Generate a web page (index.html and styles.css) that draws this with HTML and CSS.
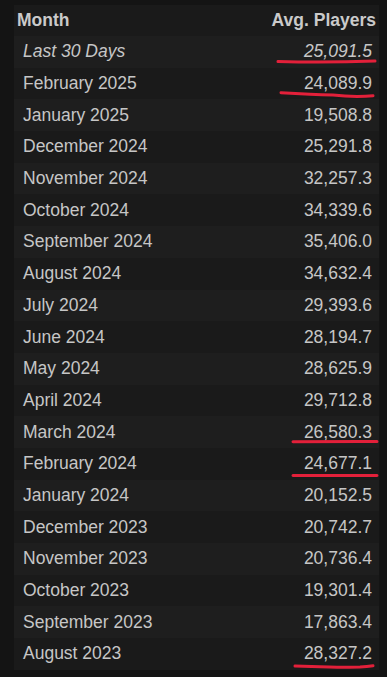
FILE: index.html
```html
<!DOCTYPE html>
<html>
<head>
<meta charset="utf-8">
<link rel="stylesheet" href="styles.css">
</head>
<body>
<div class="page">
  <div class="table">
    <div class="row head"><span>Month</span><span>Avg. Players</span></div>
    <div class="row odd recent"><span>Last 30 Days</span><span>25,091.5</span></div>
    <div class="row"><span>February 2025</span><span>24,089.9</span></div>
    <div class="row odd"><span>January 2025</span><span>19,508.8</span></div>
    <div class="row"><span>December 2024</span><span>25,291.8</span></div>
    <div class="row odd"><span>November 2024</span><span>32,257.3</span></div>
    <div class="row"><span>October 2024</span><span>34,339.6</span></div>
    <div class="row odd"><span>September 2024</span><span>35,406.0</span></div>
    <div class="row"><span>August 2024</span><span>34,632.4</span></div>
    <div class="row odd"><span>July 2024</span><span>29,393.6</span></div>
    <div class="row"><span>June 2024</span><span>28,194.7</span></div>
    <div class="row odd"><span>May 2024</span><span>28,625.9</span></div>
    <div class="row"><span>April 2024</span><span>29,712.8</span></div>
    <div class="row odd"><span>March 2024</span><span>26,580.3</span></div>
    <div class="row"><span>February 2024</span><span>24,677.1</span></div>
    <div class="row odd"><span>January 2024</span><span>20,152.5</span></div>
    <div class="row"><span>December 2023</span><span>20,742.7</span></div>
    <div class="row odd"><span>November 2023</span><span>20,736.4</span></div>
    <div class="row"><span>October 2023</span><span>19,301.4</span></div>
    <div class="row odd"><span>September 2023</span><span>17,863.4</span></div>
    <div class="row"><span>August 2023</span><span>28,327.2</span></div>
  </div>
</div>
<svg class="marks" width="387" height="677" viewBox="0 0 387 677">
  <path d="M278 61.5 Q326 62.8 375 61"/>
  <path d="M281 92.7 Q296 93.5 310 94.3 Q322 94.8 333 95 Q345 96.2 357 96.5 Q366 96.4 373 95.7"/>
  <path d="M293 441.8 Q335 441.4 377 441.5"/>
  <path d="M293 475.6 Q335 475.3 377 475.5"/>
  <path d="M295 666 Q308 666.4 320 666.7 Q330 667 337 667.3 Q350 667.2 360 667 Q367 666.6 373 665.8"/>
</svg>
</body>
</html>
```

FILE: styles.css
```css
html, body {
  margin: 0;
  padding: 0;
  background: #141414;
}

body {
  width: 387px;
  height: 677px;
  overflow: hidden;
  position: relative;
  font-family: "Liberation Sans", Arial, sans-serif;
}

.page {
  padding: 5px 8px 7px 14px;
}

.table {
  display: flex;
  flex-direction: column;
  background: #1b1b1b;
}

.row {
  display: flex;
  justify-content: space-between;
  align-items: center;
  height: 31.7px;
  padding: 0 7px 0 9px;
  font-size: 17.5px;
  color: #c6c6c6;
  background: #1a1a1a;
}

.row.odd {
  background: #1e1e1e;
}

.row.head {
  height: 31px;
  padding: 0 3px 0 3px;
  font-weight: bold;
  color: #cacaca;
  background: #1a1a1a;
}

.row.recent {
  font-style: italic;
}

.marks {
  position: absolute;
  top: 0;
  left: 0;
  pointer-events: none;
}

.marks path {
  fill: none;
  stroke: #e3203a;
  stroke-width: 3;
  stroke-linecap: round;
}
```
